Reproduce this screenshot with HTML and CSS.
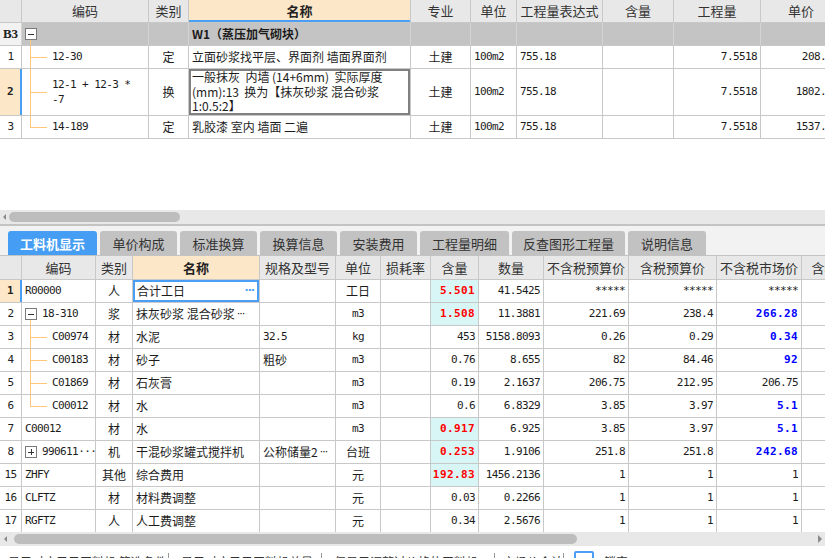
FILE: index.html
```html
<!DOCTYPE html>
<html lang="zh-CN">
<head>
<meta charset="utf-8">
<title>工料机显示</title>
<link rel="stylesheet" href="styles.css">
</head>
<body>
<div class="pane-top">
  <div class="grid top">
    <div class="row hd">
      <div class="c"></div><div class="c">编码</div><div class="c">类别</div><div class="c name-hd">名称</div><div class="c">专业</div><div class="c">单位</div><div class="c">工程量表达式</div><div class="c">含量</div><div class="c">工程量</div><div class="c">单价</div>
    </div>
    <div class="row grp">
      <div class="c idx b3">B3</div><div class="c code root"><span class="box"></span></div><div class="c"></div><div class="c gname">W1（蒸压加气砌块）</div><div class="c"></div><div class="c"></div><div class="c"></div><div class="c"></div><div class="c"></div><div class="c"></div>
    </div>
    <div class="row">
      <div class="c idx">1</div><div class="c code tree t-mid m">12-30</div><div class="c ctr">定</div><div class="c">立面砂浆找平层、界面剂 墙面界面剂</div><div class="c ctr">土建</div><div class="c m">100m2</div><div class="c m">755.18</div><div class="c"></div><div class="c r m">7.5518</div><div class="c r m">208.24</div>
    </div>
    <div class="row tall">
      <div class="c idx sel">2</div><div class="c code tree t-mid m lines">12-1 + 12-3 *<br>-7</div><div class="c ctr">换</div><div class="c edit lines14">一般抹灰&nbsp; 内墙 (14+6mm)&nbsp; 实际厚度<br>(mm):13&nbsp; 换为【抹灰砂浆 混合砂浆<br>1:0.5:2】</div><div class="c ctr">土建</div><div class="c m">100m2</div><div class="c m">755.18</div><div class="c"></div><div class="c r m">7.5518</div><div class="c r m">1802.55</div>
    </div>
    <div class="row">
      <div class="c idx">3</div><div class="c code tree t-last m">14-189</div><div class="c ctr">定</div><div class="c">乳胶漆 室内 墙面 二遍</div><div class="c ctr">土建</div><div class="c m">100m2</div><div class="c m">755.18</div><div class="c"></div><div class="c r m">7.5518</div><div class="c r m">1537.84</div>
    </div>
  </div>
</div>
<div class="hs">
  <span class="arr-l"></span><span class="thumb thumb-top"></span>
</div>

<div class="tabs">
  <div class="tab on w89">工料机显示</div>
  <div class="tab w77">单价构成</div>
  <div class="tab w77">标准换算</div>
  <div class="tab w77">换算信息</div>
  <div class="tab w77">安装费用</div>
  <div class="tab w89">工程量明细</div>
  <div class="tab w113">反查图形工程量</div>
  <div class="tab w78">说明信息</div>
</div>

<div class="pane-bot">
  <div class="grid bot">
    <div class="row hd">
      <div class="c"></div><div class="c">编码</div><div class="c">类别</div><div class="c name-hd">名称</div><div class="c">规格及型号</div><div class="c">单位</div><div class="c">损耗率</div><div class="c">含量</div><div class="c">数量</div><div class="c">不含税预算价</div><div class="c">含税预算价</div><div class="c">不含税市场价</div><div class="c">含税市场价</div>
    </div>
    <div class="row">
      <div class="c idx sel">1</div><div class="c code m">R00000</div><div class="c ctr">人</div><div class="c edit-blue"><span>合计工日</span><span class="dots">···</span></div><div class="c"></div><div class="c ctr">工日</div><div class="c"></div><div class="c r hl">5.501</div><div class="c r m">41.5425</div><div class="c r m">*****</div><div class="c r m">*****</div><div class="c r m">*****</div><div class="c"></div>
    </div>
    <div class="row">
      <div class="c idx">2</div><div class="c code root m"><span class="box"></span>18-310</div><div class="c ctr">浆</div><div class="c">抹灰砂浆 混合砂浆 <span class="dots dk">···</span></div><div class="c"></div><div class="c ctr m">m3</div><div class="c"></div><div class="c r hl">1.508</div><div class="c r m">11.3881</div><div class="c r m">221.69</div><div class="c r m">238.4</div><div class="c r bl">266.28</div><div class="c"></div>
    </div>
    <div class="row">
      <div class="c idx">3</div><div class="c code tree t-mid m">C00974</div><div class="c ctr">材</div><div class="c">水泥</div><div class="c m">32.5</div><div class="c ctr m">kg</div><div class="c"></div><div class="c r m">453</div><div class="c r m">5158.8093</div><div class="c r m">0.26</div><div class="c r m">0.29</div><div class="c r bl">0.34</div><div class="c"></div>
    </div>
    <div class="row">
      <div class="c idx">4</div><div class="c code tree t-mid m">C00183</div><div class="c ctr">材</div><div class="c">砂子</div><div class="c">粗砂</div><div class="c ctr m">m3</div><div class="c"></div><div class="c r m">0.76</div><div class="c r m">8.655</div><div class="c r m">82</div><div class="c r m">84.46</div><div class="c r bl">92</div><div class="c"></div>
    </div>
    <div class="row">
      <div class="c idx">5</div><div class="c code tree t-mid m">C01869</div><div class="c ctr">材</div><div class="c">石灰膏</div><div class="c"></div><div class="c ctr m">m3</div><div class="c"></div><div class="c r m">0.19</div><div class="c r m">2.1637</div><div class="c r m">206.75</div><div class="c r m">212.95</div><div class="c r m">206.75</div><div class="c"></div>
    </div>
    <div class="row">
      <div class="c idx">6</div><div class="c code tree t-last m">C00012</div><div class="c ctr">材</div><div class="c">水</div><div class="c"></div><div class="c ctr m">m3</div><div class="c"></div><div class="c r m">0.6</div><div class="c r m">6.8329</div><div class="c r m">3.85</div><div class="c r m">3.97</div><div class="c r bl">5.1</div><div class="c"></div>
    </div>
    <div class="row">
      <div class="c idx">7</div><div class="c code m">C00012</div><div class="c ctr">材</div><div class="c">水</div><div class="c"></div><div class="c ctr m">m3</div><div class="c"></div><div class="c r hl">0.917</div><div class="c r m">6.925</div><div class="c r m">3.85</div><div class="c r m">3.97</div><div class="c r bl">5.1</div><div class="c"></div>
    </div>
    <div class="row">
      <div class="c idx">8</div><div class="c code m"><span class="box plus"></span>990611···</div><div class="c ctr">机</div><div class="c">干混砂浆罐式搅拌机</div><div class="c">公称储量2<span class="dots dk">···</span></div><div class="c ctr">台班</div><div class="c"></div><div class="c r hl">0.253</div><div class="c r m">1.9106</div><div class="c r m">251.8</div><div class="c r m">251.8</div><div class="c r bl">242.68</div><div class="c"></div>
    </div>
    <div class="row">
      <div class="c idx">15</div><div class="c code m">ZHFY</div><div class="c ctr">其他</div><div class="c">综合费用</div><div class="c"></div><div class="c ctr">元</div><div class="c"></div><div class="c r hl">192.83</div><div class="c r m">1456.2136</div><div class="c r m">1</div><div class="c r m">1</div><div class="c r m">1</div><div class="c"></div>
    </div>
    <div class="row">
      <div class="c idx">16</div><div class="c code m">CLFTZ</div><div class="c ctr">材</div><div class="c">材料费调整</div><div class="c"></div><div class="c ctr">元</div><div class="c"></div><div class="c r m">0.03</div><div class="c r m">0.2266</div><div class="c r m">1</div><div class="c r m">1</div><div class="c r m">1</div><div class="c"></div>
    </div>
    <div class="row">
      <div class="c idx">17</div><div class="c code m">RGFTZ</div><div class="c ctr">人</div><div class="c">人工费调整</div><div class="c"></div><div class="c ctr">元</div><div class="c"></div><div class="c r m">0.34</div><div class="c r m">2.5676</div><div class="c r m">1</div><div class="c r m">1</div><div class="c r m">1</div><div class="c"></div>
    </div>
  </div>
</div>
<div class="hs">
  <span class="arr-l arr-l2"></span><span class="thumb thumb-bot"></span><span class="arr-r"></span>
</div>
<div class="status">
  <span class="st st1">显示对应子目工料机 筛选条件</span><span class="sep"></span>
  <span class="st st2">显示对应子目工料机总量</span><span class="sep"></span>
  <span class="st st3">仅显示调整过价格的工料机</span><span class="sep"></span>
  <span class="st st4">市场价合计</span><span class="sep"></span>
  <span class="chk"></span><span class="st">锁定</span>
</div>
</body>
</html>
```

FILE: styles.css
```css
* { box-sizing: border-box; margin: 0; padding: 0; }
html, body { width: 825px; height: 558px; overflow: hidden; background: #fff; }
body {
  font-family: "Noto Sans CJK SC", "Noto Sans", sans-serif;
  font-size: 12px;
  color: #1c1c1c;
}

.pane-top { height: 210px; overflow: hidden; }
.pane-bot { height: 276px; overflow: hidden; }
.grid { width: max-content; }

.row { display: grid; border-bottom: 1px solid #c8c8c8; height: 23px; }
.top .row { grid-template-columns: 22px 127px 40px 222px 60px 46px 86px 71px 87px 81px; }
.bot .row { grid-template-columns: 22px 74px 37px 127px 76px 45px 50px 48px 65px 85px 88px 85px 85px; }
.row.tall { height: 47px; }

.c {
  border-right: 1px solid #c8c8c8;
  display: flex;
  align-items: center;
  padding: 0 3px;
  white-space: nowrap;
  overflow: hidden;
  line-height: 16px;
}

.hd { background: #e8e8e8; color: #333; font-size: 13px; }
.top .hd { height: 23px; }
.bot .hd { height: 24px; }
.hd .c { justify-content: center; }
.hd .name-hd { background: #fde7c9; font-weight: bold; color: #222; }
.top .hd .name-hd { box-shadow: inset 0 -2px 0 #4a9ff5; }

.grp { background: #c4c4c4; }
.grp .c { border-right-color: #d4d4d4; }
.gname { font-weight: bold; }

.idx {
  justify-content: center;
  padding: 0;
  font-family: "DejaVu Sans Mono", monospace;
  font-size: 11px;
  letter-spacing: -0.6px;
  color: #222;
}
.idx.b3 {
  background: #f2f2f2;
  font-family: "Liberation Serif", serif;
  font-weight: bold;
  font-size: 13px;
  letter-spacing: 0;
}
.idx.sel { background: #fde7c9; border-right: 2px solid #4a9ff5; font-weight: bold; }

.ctr { justify-content: center; }
.r { justify-content: flex-end; }
.m {
  font-family: "DejaVu Sans Mono", monospace;
  font-size: 11px;
  letter-spacing: -0.6px;
}
.lines { line-height: 15px; }
.lines14 { line-height: 14.5px; }

/* tree */
.code { padding-left: 3px; }
.tree { padding-left: 30px; }
.t-mid {
  background:
    linear-gradient(#ffc878, #ffc878) 8px 0 / 1px 100% no-repeat,
    linear-gradient(#ffc878, #ffc878) 8px 50% / 17px 1px no-repeat;
}
.t-last {
  background:
    linear-gradient(#ffc878, #ffc878) 8px 0 / 1px 50% no-repeat,
    linear-gradient(#ffc878, #ffc878) 8px 50% / 17px 1px no-repeat;
}
.root {
  background: linear-gradient(#ffc878, #ffc878) 8px 100% / 1px calc(50% - 5px) no-repeat;
}
.box {
  display: inline-block;
  flex: none;
  width: 12px;
  height: 12px;
  border: 1px solid #7a7a7a;
  background: linear-gradient(#333, #333) center / 6px 1px no-repeat, #fff;
  margin-right: 5px;
}
.box.plus {
  background:
    linear-gradient(#333, #333) center / 6px 1px no-repeat,
    linear-gradient(#333, #333) center / 1px 6px no-repeat,
    #fff;
}

/* edit cells */
.edit { box-shadow: inset 0 0 0 2px #808080; padding: 0 3px; }
.edit-blue { box-shadow: inset 0 0 0 2px #4a9ff5; justify-content: space-between; padding: 0 5px 0 4px; }
.dots {
  color: #4a9ff5;
  font-family: "DejaVu Sans", sans-serif;
  font-weight: bold;
  font-size: 11px;
  letter-spacing: -1px;
}
.dots.dk { color: #222; font-weight: normal; margin-left: 2px; }

.hl {
  background: #d9f6f6;
  color: #ff0000;
  font-weight: bold;
  font-family: "DejaVu Sans Mono", monospace;
  font-size: 11px;
  letter-spacing: 0.4px;
}
.bl {
  color: #0000ff;
  font-weight: bold;
  font-family: "DejaVu Sans Mono", monospace;
  font-size: 11px;
  letter-spacing: 0.4px;
}

/* scrollbars */
.hs { height: 14px; background: #e8e8e8; display: flex; align-items: center; }
.arr-l {
  width: 0; height: 0;
  border-style: solid;
  border-width: 3px 3px 3px 0;
  border-color: transparent #8a8a8a transparent transparent;
  margin-left: 3px;
}
.arr-l2 { margin-left: 4px; }
.arr-r {
  width: 0; height: 0;
  border-style: solid;
  border-width: 4px 0 4px 4px;
  border-color: transparent transparent transparent #8a8a8a;
  margin-left: auto;
  margin-right: 3px;
}
.thumb { height: 10px; background: #bdbdbd; border-radius: 5px; }
.thumb-top { margin-left: 3px; width: 171px; }
.thumb-bot { margin-left: 7px; width: 563px; }

/* tabs */
.tabs {
  display: flex;
  align-items: flex-end;
  gap: 3px;
  height: 32px;
  border-top: 2px solid #c3c3c3;
  border-bottom: 1px solid #c3c3c3;
  background: #f2f2f2;
  padding-left: 8px;
  font-size: 13px;
}
.tab {
  height: 24px;
  background: #c2c2c2;
  border-radius: 3px 3px 0 0;
  display: flex;
  align-items: center;
  justify-content: center;
  color: #333;
  flex: none;
}
.tab.on { background: #459ef4; color: #fff; font-weight: bold; }
.w77 { width: 77px; }
.w78 { width: 78px; }
.w89 { width: 89px; }
.w113 { width: 113px; }

/* status bar (cut off at the bottom edge) */
.status {
  height: 12px;
  overflow: hidden;
  display: flex;
  align-items: flex-start;
  padding-top: 8px;
  padding-left: 8px;
  color: #333;
  line-height: 16px;
}
.st { white-space: nowrap; }
.st1 { width: 160px; }
.st2 { width: 140px; margin-left: 12px; }
.st3 { width: 160px; margin-left: 12px; }
.st4 { width: 60px; margin-left: 8px; overflow: hidden; }
.sep { width: 1px; height: 12px; background: #999; margin-top: -1px; }
.chk {
  width: 20px; height: 16px;
  border: 2px solid #4a9ff5;
  border-radius: 2px;
  margin: -3px 10px 0;
}
```
